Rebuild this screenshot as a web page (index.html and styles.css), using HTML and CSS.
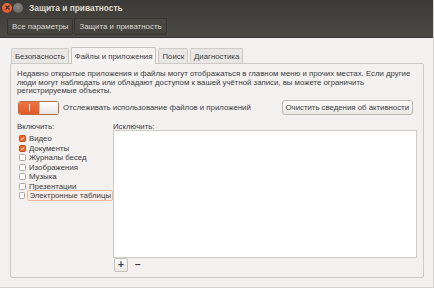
FILE: index.html
```html
<!DOCTYPE html>
<html lang="ru">

<head>
    <meta charset="UTF-8">
    <title>Защита и приватность</title>
    <link rel="stylesheet" href="styles.css">
</head>

<body>
    <div class="window">
        <div class="top">
            <div class="titlebar">
                <span class="wbtn close">
                    <svg width="7" height="7" viewBox="0 0 7 7"><path d="M1.5 1.5 L5.5 5.5 M5.5 1.5 L1.5 5.5" stroke="#3b2a22" stroke-width="1.3"/></svg>
                </span>
                <span class="wbtn min"></span>
                <span class="title">Защита и приватность</span>
            </div>
            <div class="toolbar">
                <span class="crumb">Все параметры</span>
                <span class="crumb">Защита и приватность</span>
            </div>
        </div>

        <div class="content">
            <div class="tabs">
                <span class="tab">Безопасность</span>
                <span class="tab active">Файлы и приложения</span>
                <span class="tab">Поиск</span>
                <span class="tab">Диагностика</span>
            </div>
            <div class="panel">
                <p class="desc">Недавно открытые приложения и файлы могут отображаться в главном меню и прочих местах. Если другие<br>люди могут наблюдать или обладают доступом к вашей учётной записи, вы можете ограничить<br>регистрируемые объекты.</p>

                <div class="track-row">
                    <span class="switch"><span class="on"><i></i></span><span class="knob"></span></span>
                    <span class="track-label">Отслеживать использование файлов и приложений</span>
                    <span class="button">Очистить сведения об активности</span>
                </div>

                <div class="lists">
                    <div class="include">
                        <div class="head">Включить:</div>
                        <div class="check checked"><span class="box"><svg width="7" height="7" viewBox="0 0 7 7"><path d="M1.3 3.6 L2.9 5.1 L5.8 1.8" fill="none" stroke="#fff" stroke-width="1.3"/></svg></span>Видео</div>
                        <div class="check checked"><span class="box"><svg width="7" height="7" viewBox="0 0 7 7"><path d="M1.3 3.6 L2.9 5.1 L5.8 1.8" fill="none" stroke="#fff" stroke-width="1.3"/></svg></span>Документы</div>
                        <div class="check"><span class="box"></span>Журналы бесед</div>
                        <div class="check"><span class="box"></span>Изображения</div>
                        <div class="check"><span class="box"></span>Музыка</div>
                        <div class="check"><span class="box"></span>Презентации</div>
                        <div class="check"><span class="box"></span><span class="focus">Электронные таблицы</span></div>
                    </div>
                    <div class="exclude">
                        <div class="head">Исключить:</div>
                        <div class="listbox"></div>
                        <div class="tools">
                            <span class="tool plus">+</span>
                            <span class="tool minus">−</span>
                        </div>
                    </div>
                </div>
            </div>
        </div>
    </div>
</body>

</html>
```

FILE: styles.css
```css
body {
    margin: 0;
    font-family: "Liberation Sans", "DejaVu Sans", sans-serif;
    font-size: 7.8px;
    color: #3c3c3c;
    white-space: nowrap;
}

.window {
    width: 434px;
    height: 288px;
    box-sizing: border-box;
    background: #f2f1f0;
    border-right: 1px solid #d3d0cc;
    border-bottom: 1px solid #d3d0cc;
    display: flex;
    flex-direction: column;
    overflow: hidden;
}

.top {
    background: linear-gradient(#3b3a36, #4b4944);
    border-bottom: 1px solid #35342f;
    height: 38px;
    box-sizing: border-box;
}

.titlebar {
    height: 15px;
    display: flex;
    align-items: center;
    padding-left: 2px;
}

.wbtn {
    width: 10px;
    height: 10px;
    border-radius: 50%;
    margin-right: 1px;
    display: flex;
    align-items: center;
    justify-content: center;
}

.close {
    background: radial-gradient(circle at 50% 35%, #f37a4f, #d9461c);
}

.min {
    background: radial-gradient(circle at 50% 35%, #8a8781, #5f5d58);
}

.title {
    color: #dfdbd2;
    font-weight: bold;
    margin-left: 5px;
    font-size: 8.4px;
}

.toolbar {
    display: flex;
    padding: 3px 0 0 7px;
}

.crumb {
    height: 17px;
    box-sizing: border-box;
    border: 1px solid #36352f;
    background: linear-gradient(#4a4843, #44423d);
    color: #dfdbd2;
    padding: 0 4px;
    display: flex;
    align-items: center;
    border-radius: 2px;
    margin-right: 1px;
    font-size: 7.9px;
}

.content {
    flex: 1;
    padding: 8px 9px 9px 10px;
    display: flex;
    flex-direction: column;
}

.tabs {
    display: flex;
    align-items: flex-end;
    padding-left: 1px;
    height: 17px;
}

.tab {
    height: 15px;
    box-sizing: border-box;
    background: #e9e7e4;
    border: 1px solid #cfccc7;
    border-bottom: none;
    border-radius: 2px 2px 0 0;
    padding: 0 3px;
    margin-right: 2px;
    display: flex;
    align-items: center;
}

.tab.active {
    height: 17px;
    background: #f4f3f2;
    border-color: #c7c4bf;
    position: relative;
    top: 1px;
}

.panel {
    flex: 1;
    border: 1px solid #cdcac5;
    border-radius: 2px;
    padding: 6px 6px 5px 6px;
    display: flex;
    flex-direction: column;
}

.desc {
    margin: 0;
    line-height: 8.6px;
}

.track-row {
    display: flex;
    align-items: center;
    margin-top: 4px;
    height: 16px;
}

.switch {
    width: 41px;
    height: 14px;
    box-sizing: border-box;
    border: 1px solid #b96a4a;
    border-radius: 3px;
    display: flex;
    overflow: hidden;
    margin-left: 1px;
}

.switch .on {
    width: 20px;
    background: linear-gradient(#f07440, #e35a26);
    display: flex;
    align-items: center;
    justify-content: center;
}

.switch .on i {
    width: 1px;
    height: 7px;
    background: #fff;
}

.switch .knob {
    flex: 1;
    background: linear-gradient(#ffffff, #e8e6e3);
    border-left: 1px solid #c4c0ba;
}

.track-label {
    margin-left: 4px;
    flex: 1;
}

.button {
    height: 15px;
    box-sizing: border-box;
    border: 1px solid #bdb9b3;
    border-radius: 3px;
    background: linear-gradient(#fbfbfa, #ebe9e6);
    padding: 0 3px;
    display: flex;
    align-items: center;
    margin-right: 4px;
}

.lists {
    flex: 1;
    display: flex;
    margin-top: 6px;
}

.include {
    width: 96px;
}

.head {
    height: 9px;
    line-height: 9px;
}

.check {
    display: flex;
    align-items: center;
    height: 9.5px;
    padding-left: 2px;
}

.check:nth-child(2) {
    margin-top: 3px;
}

.box {
    width: 7px;
    height: 7px;
    box-sizing: border-box;
    border: 1px solid #aaa7a2;
    border-radius: 1.5px;
    background: #fff;
    margin-right: 3px;
    display: flex;
    align-items: center;
    justify-content: center;
}

.box svg {
    display: block;
}

.checked .box {
    background: #e9642e;
    border-color: #c8501f;
}

.focus {
    border: 1px solid #f2b8a0;
    background: #fcefe9;
    border-radius: 2px;
    padding: 0 1px;
    margin-left: -1px;
    line-height: 9px;
}

.exclude {
    flex: 1;
    display: flex;
    flex-direction: column;
}

.exclude .head {
    margin-bottom: -2px;
}

.listbox {
    flex: 1;
    background: #fff;
    border: 1px solid #cfccc7;
    margin-top: 1px;
}

.tools {
    display: flex;
    align-items: center;
    height: 15px;
    margin-top: -1px;
}

.tool {
    width: 14px;
    height: 14px;
    box-sizing: border-box;
    display: flex;
    align-items: center;
    justify-content: center;
    font-size: 10px;
    font-weight: bold;
    margin-left: 1px;
}

.plus {
    border: 1px solid #c4c0ba;
    border-radius: 2px;
    background: linear-gradient(#fbfbfa, #ebe9e6);
}

.minus {
    margin-left: 3px;
}
```
